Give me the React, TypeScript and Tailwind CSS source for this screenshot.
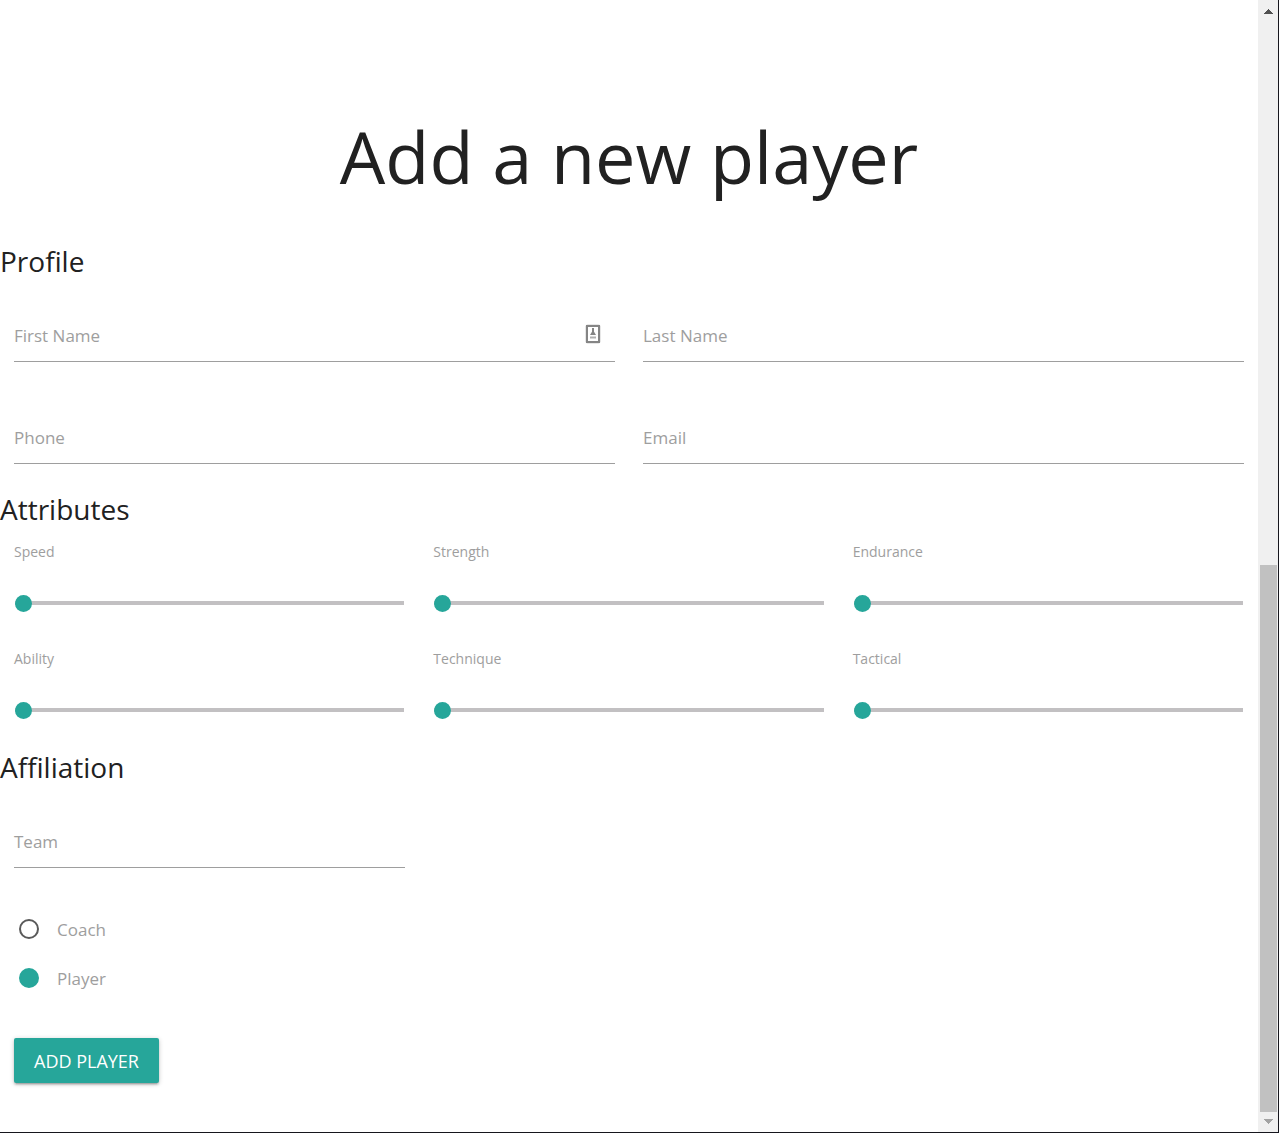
import { useState } from "react";

function Field({ id, label, type = "text", children }: { id: string; label: string; type?: string; children?: React.ReactNode }) {
  return (
    <div className="relative">
      <input
        id={id}
        type={type}
        placeholder=" "
        className="peer block h-[54px] w-full border-b border-[#9e9e9e] bg-transparent text-lg text-[#212121] outline-none focus:border-[#26a69a]"
      />
      <label
        htmlFor={id}
        className="absolute left-0 -top-3 cursor-text text-sm text-[#9e9e9e] peer-placeholder-shown:top-4 peer-placeholder-shown:text-[17px] peer-placeholder-shown:leading-6"
      >
        {label}
      </label>
      {children}
    </div>
  );
}

function Attribute({ label }: { label: string }) {
  const [value, setValue] = useState(0);
  const id = label.toLowerCase();
  return (
    <div className="h-[102px] px-3.5">
      <label htmlFor={id} className="block text-sm leading-5 text-[#9e9e9e]">
        {label}
      </label>
      <input
        id={id}
        type="range"
        min={0}
        max={100}
        value={value}
        onChange={(e) => setValue(Number(e.target.value))}
        className="mt-[31px] block h-5 w-full cursor-pointer appearance-none border border-transparent bg-transparent outline-none [&::-webkit-slider-runnable-track]:h-1 [&::-webkit-slider-runnable-track]:bg-[#c2c0c2] [&::-webkit-slider-thumb]:-mt-1.5 [&::-webkit-slider-thumb]:size-[17px] [&::-webkit-slider-thumb]:appearance-none [&::-webkit-slider-thumb]:rounded-full [&::-webkit-slider-thumb]:bg-[#26a69a]"
      />
    </div>
  );
}

function RoleOption({ value, label, defaultChecked = false }: { value: string; label: string; defaultChecked?: boolean }) {
  return (
    <label className="flex h-[49px] cursor-pointer items-center text-[17px] leading-6 text-[#9e9e9e]">
      <input
        type="radio"
        name="role"
        value={value}
        defaultChecked={defaultChecked}
        className="mr-[18px] ml-[5px] size-5 cursor-pointer appearance-none rounded-full border-2 border-[#5a5a5a] checked:border-[#26a69a] checked:bg-[#26a69a]"
      />
      <span className="pt-0.5">{label}</span>
    </label>
  );
}

function SectionTitle({ children }: { children: React.ReactNode }) {
  return <h2 className="text-[28px] leading-8">{children}</h2>;
}

function ContactIcon() {
  return (
    <svg className="absolute top-4 right-3.5 h-5 w-4" viewBox="0 0 16 20" aria-hidden="true">
      <rect x="0.5" y="0.5" width="15" height="19" rx="2" fill="#d0d0d0" />
      <rect x="2" y="2" width="12" height="16" fill="#fff" stroke="#858585" strokeWidth="2" />
      <path d="M8 4V8" stroke="#858585" strokeWidth="2" />
      <path d="M8 6L11 11H5Z" fill="#858585" />
      <path d="M5 13.5H11" stroke="#b0b0b0" strokeWidth="2" />
    </svg>
  );
}

function ScrollRail() {
  return (
    <div className="flex w-5 shrink-0 flex-col items-center bg-[#f0f0f0]" aria-hidden="true">
      <svg className="mt-[9px] h-[5px] w-[9px]" viewBox="0 0 9 5" shapeRendering="crispEdges">
        <path d="M0 5L4.5 0L9 5Z" fill="#505050" />
      </svg>
      <div className="flex-1" />
      <div className="h-[547px] w-[17px] bg-[#c1c1c1]" />
      <svg className="mt-[7px] mb-2 h-[5px] w-[9px]" viewBox="0 0 9 5" shapeRendering="crispEdges">
        <path d="M0 0H9L4.5 5Z" fill="#a3a3a3" />
      </svg>
    </div>
  );
}

export default function App() {
  return (
    <div className="flex min-h-screen border-r border-b border-[#16161d] bg-white font-['Open_Sans','Noto_Sans',sans-serif] text-[#212121]">
      <main className="min-w-0 flex-1 pb-12">
        <h1 className="pt-[106px] text-center text-[72px] leading-[100px]">Add a new player</h1>
        <form onSubmit={(e) => e.preventDefault()}>
          <div className="mt-[39px]">
            <SectionTitle>Profile</SectionTitle>
          </div>
          <div className="mt-[31px] grid grid-cols-2 gap-x-7 gap-y-12 px-3.5">
            <Field id="first-name" label="First Name">
              <ContactIcon />
            </Field>
            <Field id="last-name" label="Last Name" />
            <Field id="phone" label="Phone" type="tel" />
            <Field id="email" label="Email" type="email" />
          </div>
          <div className="mt-[29px]">
            <SectionTitle>Attributes</SectionTitle>
          </div>
          <div className="mt-[17px] grid grid-cols-3 gap-y-[5px]">
            <Attribute label="Speed" />
            <Attribute label="Strength" />
            <Attribute label="Endurance" />
            <Attribute label="Ability" />
            <Attribute label="Technique" />
            <Attribute label="Tactical" />
          </div>
          <SectionTitle>Affiliation</SectionTitle>
          <div className="mt-[31px] w-1/3 px-3.5">
            <Field id="team" label="Team" />
          </div>
          <div role="radiogroup" aria-label="Role" className="mt-9 px-3.5">
            <RoleOption value="coach" label="Coach" />
            <RoleOption value="player" label="Player" defaultChecked />
          </div>
          <button
            type="submit"
            className="mt-9 ml-3.5 h-[45px] cursor-pointer rounded-xs bg-[#26a69a] px-5 text-lg text-white uppercase shadow-[0_2px_2px_rgba(0,0,0,0.14),0_3px_1px_-2px_rgba(0,0,0,0.12),0_1px_5px_rgba(0,0,0,0.2)]"
          >
            Add player
          </button>
        </form>
      </main>
      <ScrollRail />
    </div>
  );
}
